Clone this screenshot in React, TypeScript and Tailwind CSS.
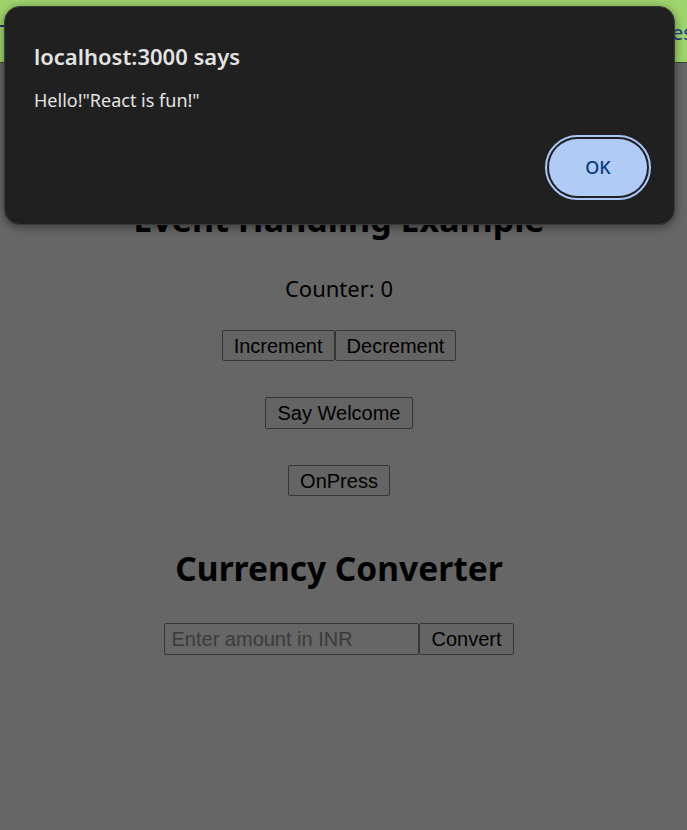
export default function App() {
  const pageFont = { fontFamily: '"Noto Sans", "Open Sans", sans-serif' };
  const btnFont = { fontFamily: '"Liberation Sans", Arial, sans-serif' };

  return (
    <div className="relative w-full h-[830px] overflow-hidden bg-[#666666]">
      {/* top bar */}
      <div className="relative h-[63px] bg-[#9fd46c] border-b border-[#3c4a33]">
        <div className="absolute left-0 top-[25px] w-[4px] h-[2px] bg-[#1f2f6b]" />
        <span
          className="absolute left-[672px] top-[18px] text-[20px] text-[#1c3a8c] whitespace-nowrap"
          style={pageFont}
        >
          es
        </span>
      </div>

      {/* dimmed page */}
      <div className="flex flex-col items-center pr-[9px] text-black" style={pageFont}>
        <h1 className="mt-[136px] text-[34px] font-bold leading-[40px]">Event Handling Example</h1>
        <p className="mt-[34px] text-[22px] leading-[30px]">Counter: 0</p>
        <div className="mt-[27px] flex" style={btnFont}>
          <button className="h-[31px] px-[11px] text-[20px] bg-[#646464] border border-[#363636] rounded-[2px]">
            Increment
          </button>
          <button className="h-[31px] px-[11px] text-[20px] bg-[#646464] border border-[#363636] rounded-[2px]">
            Decrement
          </button>
        </div>
        <button
          className="mt-[36px] h-[32px] px-[11px] text-[20px] bg-[#646464] border border-[#363636] rounded-[2px]"
          style={btnFont}
        >
          Say Welcome
        </button>
        <button
          className="mt-[36px] h-[31px] px-[11px] text-[20px] bg-[#646464] border border-[#363636] rounded-[2px]"
          style={btnFont}
        >
          OnPress
        </button>
        <h2 className="mt-[51px] text-[33.5px] font-bold leading-[42px]">Currency Converter</h2>
        <div className="mt-[34px] flex" style={btnFont}>
          <input
            className="w-[255px] h-[32px] px-[6px] text-[20px] bg-[#666666] border border-[#363636] rounded-[2px] placeholder:text-[#3b3b3b] outline-none"
            placeholder="Enter amount in INR"
          />
          <button className="h-[32px] px-[11px] text-[20px] bg-[#646464] border border-[#363636] rounded-[2px]">
            Convert
          </button>
        </div>
      </div>

      {/* alert dialog */}
      <div
        className="absolute left-[4px] top-[6px] w-[671px] h-[219px] rounded-[16px] bg-[#202020] border border-[#3a3a3a] shadow-[0_2px_10px_rgba(0,0,0,0.45)] text-[#e3e3e3]"
        style={pageFont}
      >
        <div className="pl-[29px] pt-[34px]">
          <div className="text-[22px] font-semibold leading-[30px]">localhost:3000 says</div>
          <div className="mt-[17px] text-[18px] leading-[24px]">Hello!"React is fun!"</div>
        </div>
        <div className="absolute right-[23px] bottom-[24px] rounded-full border-2 border-[#a8c7fa] p-[2px]">
          <button className="w-[98px] h-[57px] rounded-full bg-[#b0cbf5] text-[#0b3b7c] text-[18px] font-medium border-0">
            OK
          </button>
        </div>
      </div>
    </div>
  );
}
